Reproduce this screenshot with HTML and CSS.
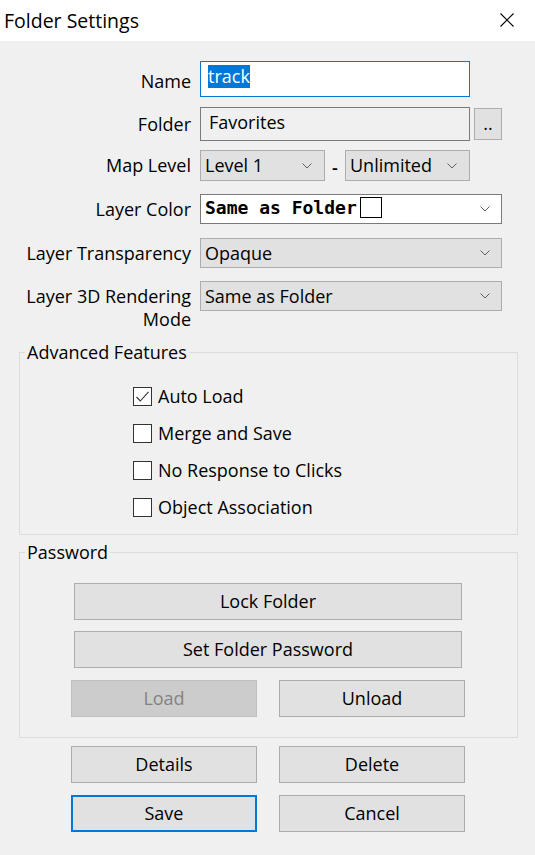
FILE: index.html
```html
<!DOCTYPE html>
<html lang="en">
<head>
<meta charset="utf-8">
<title>Folder Settings</title>
<link rel="stylesheet" href="styles.css">
</head>
<body>
<div class="titlebar">
  <span class="title">Folder Settings</span>
  <svg class="close" width="14" height="14" viewBox="0 0 14 14"><path d="M0.5 0.5 L13.5 13.5 M13.5 0.5 L0.5 13.5" stroke="#000" stroke-width="1.1" fill="none"/></svg>
</div>
<div class="dialog">
  <div class="row r-name">
    <label class="lbl lbl-name">Name</label>
    <div class="textbox"><span class="sel">track</span></div>
  </div>
  <div class="row r-folder">
    <label class="lbl">Folder</label>
    <div class="field">Favorites</div>
    <button class="btn btn-dots">..</button>
  </div>
  <div class="row r-map">
    <label class="lbl">Map Level</label>
    <div class="combo combo-half"><span>Level 1</span><svg class="chev" width="10" height="6" viewBox="0 0 10 6"><path d="M0.5 0.5 L5 5 L9.5 0.5" fill="none" stroke="#606060" stroke-width="1"/></svg></div>
    <span class="dash">-</span>
    <div class="combo combo-half"><span>Unlimited</span><svg class="chev" width="10" height="6" viewBox="0 0 10 6"><path d="M0.5 0.5 L5 5 L9.5 0.5" fill="none" stroke="#606060" stroke-width="1"/></svg></div>
  </div>
  <div class="row r-color">
    <label class="lbl">Layer Color</label>
    <div class="combo combo-full combo-white"><span class="mono">Same as Folder</span><span class="swatch"></span><svg class="chev" width="10" height="6" viewBox="0 0 10 6"><path d="M0.5 0.5 L5 5 L9.5 0.5" fill="none" stroke="#606060" stroke-width="1"/></svg></div>
  </div>
  <div class="row r-transp">
    <label class="lbl">Layer Transparency</label>
    <div class="combo combo-full"><span>Opaque</span><svg class="chev" width="10" height="6" viewBox="0 0 10 6"><path d="M0.5 0.5 L5 5 L9.5 0.5" fill="none" stroke="#606060" stroke-width="1"/></svg></div>
  </div>
  <div class="row r-3d">
    <label class="lbl lbl-wrap">Layer 3D Rendering Mode</label>
    <div class="combo combo-full"><span>Same as Folder</span><svg class="chev" width="10" height="6" viewBox="0 0 10 6"><path d="M0.5 0.5 L5 5 L9.5 0.5" fill="none" stroke="#606060" stroke-width="1"/></svg></div>
  </div>

  <fieldset class="group group-adv">
    <legend>Advanced Features</legend>
    <div class="checks">
      <div class="check"><span class="box"><svg width="19" height="19" viewBox="0 0 19 19"><path d="M3.5 10 L7.3 14 L15.5 4.8" fill="none" stroke="#333" stroke-width="1.1"/></svg></span>Auto Load</div>
      <div class="check"><span class="box"></span>Merge and Save</div>
      <div class="check"><span class="box"></span>No Response to Clicks</div>
      <div class="check"><span class="box"></span>Object Association</div>
    </div>
  </fieldset>

  <fieldset class="group group-pwd">
    <legend>Password</legend>
    <div class="pwd">
      <button class="btn btn-wide">Lock Folder</button>
      <button class="btn btn-wide">Set Folder Password</button>
      <div class="pair">
        <button class="btn btn-half btn-disabled" disabled>Load</button>
        <button class="btn btn-half">Unload</button>
      </div>
    </div>
  </fieldset>

  <div class="actions">
    <button class="btn btn-half">Details</button>
    <button class="btn btn-half">Delete</button>
    <button class="btn btn-half btn-default">Save</button>
    <button class="btn btn-half">Cancel</button>
  </div>
</div>
</body>
</html>
```
FILE: styles.css
```css
* { box-sizing: border-box; }
html, body { margin: 0; padding: 0; }
body {
  width: 535px;
  height: 855px;
  background: #f0f0f0;
  font-family: "Open Sans", "Noto Sans", sans-serif;
  font-size: 18px;
  line-height: 23px;
  color: #000;
  overflow: hidden;
}
.titlebar {
  height: 41px;
  background: #fff;
  display: flex;
  align-items: center;
  justify-content: space-between;
  padding: 0 21px 0 4px;
}
.title { font-size: 19.5px; line-height: 41px; }
.close { display: block; margin-top: -1px; }

.dialog { padding-top: 20px; }
.row { display: flex; align-items: center; }
.lbl {
  flex: 0 0 191px;
  width: 191px;
  margin-right: 9px;
  text-align: right;
  line-height: 23px;
}
.lbl-name { padding-top: 5px; }
.r-folder { margin-top: 10px; }
.r-map { margin-top: 9px; }
.r-color { margin-top: 13px; }
.r-transp { margin-top: 14px; }
.r-3d { margin-top: 13px; align-items: flex-start; }
.lbl-wrap { padding-top: 4px; }

.textbox {
  width: 270px;
  height: 36px;
  background: #fff;
  border: 1px solid #0078d7;
  padding: 2px 7px;
}
.sel {
  display: inline-block;
  height: 23px;
  line-height: 23px;
  margin-top: 1px;
  background: #0078d7;
  color: #fff;
}
.field {
  width: 270px;
  height: 34px;
  border: 1px solid #7a7a7a;
  background: #f0f0f0;
  padding: 3px 8px 0;
}
.btn {
  font-family: inherit;
  font-size: 18px;
  line-height: 23px;
  color: #000;
  background: #e1e1e1;
  border: 1px solid #adadad;
  padding: 0;
  margin: 0;
  border-radius: 0;
  display: flex;
  align-items: center;
  justify-content: center;
}
.btn-dots {
  width: 28px;
  height: 32px;
  margin-left: 4px;
  align-items: flex-start;
  padding-top: 3px;
}
.combo {
  height: 30px;
  background: #e1e1e1;
  border: 1px solid #adadad;
  display: flex;
  align-items: center;
  padding-left: 4px;
  position: relative;
}
.r-map .combo { height: 31px; }
.combo-half { width: 125px; }
.combo-full { width: 302px; }
.combo-white { background: #fff; border-color: #7a7a7a; }
.chev { position: absolute; right: 11px; top: 50%; margin-top: -3px; }
.combo-half .chev { right: 12px; }
.dash {
  width: 20px;
  text-align: center;
  font-weight: 600;
  padding-top: 4px;
}
.mono {
  font-family: "DejaVu Sans Mono", "Liberation Mono", monospace;
  font-weight: bold;
  font-size: 18px;
  margin-top: -3px;
}
.swatch {
  width: 22px;
  height: 21px;
  border: 1px solid #000;
  background: #fff;
  margin-left: 3px;
  margin-top: -3px;
}

.group {
  margin: 0 0 0 19px;
  width: 499px;
  padding: 0;
  border: 1px solid #dcdcdc;
  min-inline-size: 0;
}
.group legend {
  margin-left: 5px;
  padding: 0 2px;
  line-height: 23px;
}
.group-adv { margin-top: 10px; }
.group-pwd { margin-top: 6px; }
.checks {
  display: flex;
  flex-direction: column;
  gap: 14px;
  padding: 21px 0 15px 113px;
}
.check { display: flex; align-items: center; height: 23px; }
.box {
  width: 19px;
  height: 19px;
  border: 1px solid #333;
  background: #fff;
  margin-right: 6px;
  position: relative;
  flex: 0 0 19px;
}
.box svg { position: absolute; left: -1px; top: -1px; }

.pwd {
  display: flex;
  flex-direction: column;
  align-items: center;
  padding: 19px 1px 20px 0;
}
.btn-wide { width: 388px; height: 37px; }
.btn-wide + .btn-wide { margin-top: 11px; }
.pair { display: flex; gap: 22px; margin-top: 12px; }
.btn-half { width: 186px; height: 37px; }
.btn-disabled { background: #cccccc; border-color: #bfbfbf; color: #838383; }

.actions {
  display: grid;
  grid-template-columns: 186px 186px;
  column-gap: 22px;
  row-gap: 12px;
  margin: 8px 0 0 71px;
}
.btn-default { border: 2px solid #0078d7; }
```
